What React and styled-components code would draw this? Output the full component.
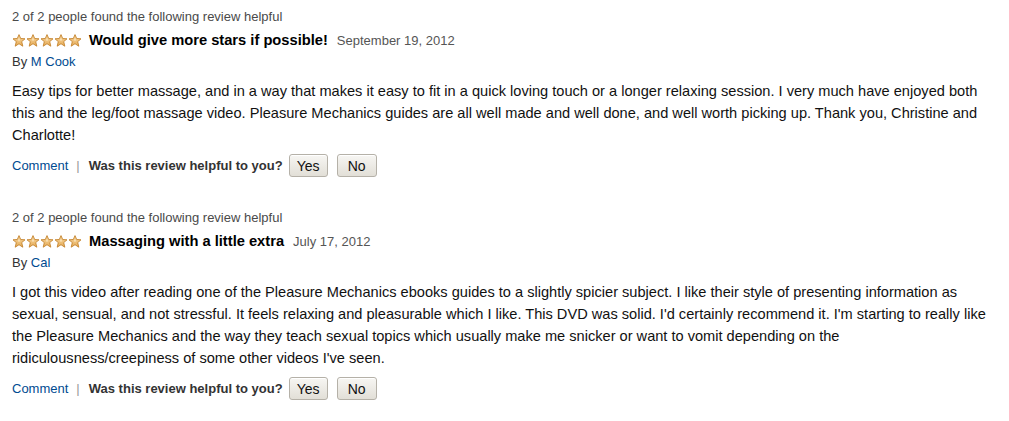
import React from 'react';
import styled, { createGlobalStyle } from 'styled-components';

const GlobalStyle = createGlobalStyle`
  body {
    margin: 0;
    background: #fff;
    font-family: "Liberation Sans", Arial, sans-serif;
  }
`;

const Page = styled.div`
  padding: 9px 12px 0 12px;
  width: 1009px;
  box-sizing: border-box;
`;

const Review = styled.div`
  margin-bottom: 33px;
`;

const Helpful = styled.div`
  font-size: 13px;
  line-height: 16px;
  color: #4a4a4a;
`;

const TitleRow = styled.div`
  display: flex;
  align-items: center;
  margin-top: 6px;
  height: 18px;
`;

const Stars = styled.span`
  display: inline-flex;
  margin-right: 7px;
`;

const Title = styled.b`
  font-size: 14.7px;
  color: #000;
  margin-right: 9px;
`;

const DateText = styled.span`
  font-size: 13px;
  color: #555;
`;

const Byline = styled.div`
  margin-top: 5px;
  font-size: 13px;
  line-height: 16px;
  color: #333;
`;

const Link = styled.a`
  color: #004b91;
  text-decoration: none;
`;

const Body = styled.p`
  margin: 10px 0 0 0;
  font-size: 14.6px;
  line-height: 22px;
  color: #111;
`;

const Footer = styled.div`
  display: flex;
  align-items: center;
  margin-top: 8px;
  font-size: 13px;
  color: #333;
`;

const Sep = styled.span`
  color: #999;
  margin: 0 9px 0 8px;
`;

const Question = styled.b`
  margin-right: 6px;
`;

const VoteButton = styled.button`
  font-family: "Liberation Sans", Arial, sans-serif;
  font-size: 14px;
  color: #111;
  height: 23px;
  width: ${p => p.$w}px;
  margin-right: 9px;
  padding: 0;
  border: 1px solid #b5b1a8;
  border-radius: 3px;
  background: linear-gradient(#f7f6f3, #e2dfd7);
  box-shadow: inset 0 1px 0 #fff;
`;

const Star = () => (
  <svg width="14" height="13" viewBox="0 0 14 13">
    <defs>
      <linearGradient id="sg" x1="0" y1="0" x2="0" y2="1">
        <stop offset="0" stopColor="#f7d59c" />
        <stop offset="1" stopColor="#e6ad5a" />
      </linearGradient>
    </defs>
    <polygon
      points="7,0.6 8.7,4.5 13,4.8 9.7,7.6 10.8,12.2 7,9.7 3.2,12.2 4.3,7.6 1,4.8 5.3,4.5"
      fill="url(#sg)"
      stroke="#c4832e"
      strokeWidth="0.9"
      strokeLinejoin="round"
    />
    <polygon points="7,3.5 8.2,6.6 5.8,6.6" fill="#fdeccc" opacity="0.8" />
  </svg>
);

const reviews = [
  {
    title: 'Would give more stars if possible!',
    date: 'September 19, 2012',
    author: 'M Cook',
    text: 'Easy tips for better massage, and in a way that makes it easy to fit in a quick loving touch or a longer relaxing session. I very much have enjoyed both this and the leg/foot massage video. Pleasure Mechanics guides are all well made and well done, and well worth picking up. Thank you, Christine and Charlotte!',
  },
  {
    title: 'Massaging with a little extra',
    date: 'July 17, 2012',
    author: 'Cal',
    text: "I got this video after reading one of the Pleasure Mechanics ebooks guides to a slightly spicier subject. I like their style of presenting information as sexual, sensual, and not stressful. It feels relaxing and pleasurable which I like. This DVD was solid. I'd certainly recommend it. I'm starting to really like the Pleasure Mechanics and the way they teach sexual topics which usually make me snicker or want to vomit depending on the ridiculousness/creepiness of some other videos I've seen.",
  },
];

export default function App() {
  return (
    <Page>
      <GlobalStyle />
      {reviews.map((r, i) => (
        <Review key={i}>
          <Helpful>2 of 2 people found the following review helpful</Helpful>
          <TitleRow>
            <Stars>
              {[0, 1, 2, 3, 4].map(s => <Star key={s} />)}
            </Stars>
            <Title>{r.title}</Title>
            <DateText>{r.date}</DateText>
          </TitleRow>
          <Byline>By <Link href="#">{r.author}</Link></Byline>
          <Body>{r.text}</Body>
          <Footer>
            <Link href="#">Comment</Link>
            <Sep>|</Sep>
            <Question>Was this review helpful to you?</Question>
            <VoteButton $w={39}>Yes</VoteButton>
            <VoteButton $w={40}>No</VoteButton>
          </Footer>
        </Review>
      ))}
    </Page>
  );
}
